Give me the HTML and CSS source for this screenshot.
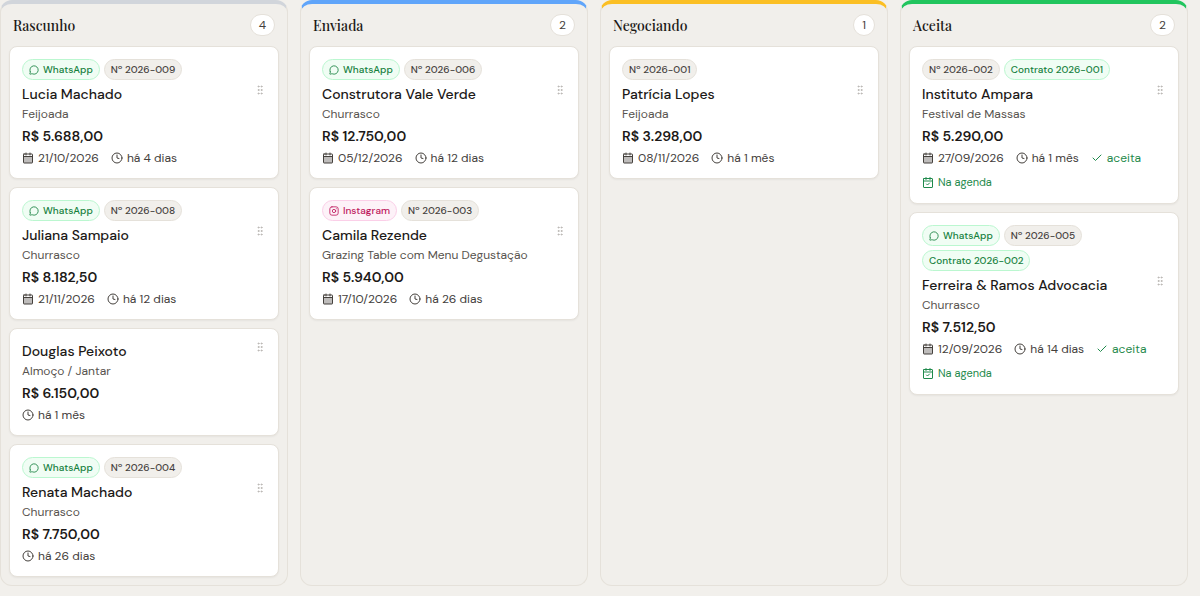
FILE: index.html
```
<!DOCTYPE html>
<html lang="pt-BR">
<head>
<meta charset="utf-8">
<meta name="viewport" content="width=device-width, initial-scale=1">
<title>Propostas</title>
<link rel="stylesheet" href="styles.css">
</head>
<body>
<svg class="sprite" aria-hidden="true">
  <symbol id="chat" viewBox="0 0 24 24"><path d="M2.992 16.342a2 2 0 0 1 .094 1.167l-1.065 3.29a1 1 0 0 0 1.236 1.168l3.413-.998a2 2 0 0 1 1.099.092 10 10 0 1 0-4.777-4.719"/></symbol>
  <symbol id="instagram" viewBox="0 0 24 24"><rect x="2" y="2" width="20" height="20" rx="5"/><circle cx="12" cy="12" r="4"/><path d="M17.5 6.5h.01"/></symbol>
  <symbol id="grip" viewBox="0 0 24 24"><circle cx="9" cy="5" r="1"/><circle cx="9" cy="12" r="1"/><circle cx="9" cy="19" r="1"/><circle cx="15" cy="5" r="1"/><circle cx="15" cy="12" r="1"/><circle cx="15" cy="19" r="1"/></symbol>
  <symbol id="calendar" viewBox="0 0 24 24"><rect x="3" y="9" width="18" height="13" fill="currentColor" fill-opacity=".35" stroke="none"/><path d="M8 2v4M16 2v4M3 9h18"/><rect x="3" y="4" width="18" height="18" rx="1"/></symbol>
  <symbol id="agenda" viewBox="0 0 24 24"><path d="M8 1v4M16 1v4M3 8h18M9 14l2 2 4-4"/><rect x="3" y="3" width="18" height="18" rx="1"/></symbol>
  <symbol id="clock" viewBox="0 0 24 24"><circle cx="12" cy="12" r="10"/><path d="M12 6v6l4 1"/></symbol>
  <symbol id="check" viewBox="0 0 24 24"><path d="M20 6 9 17l-5-5"/></symbol>
</svg>
<main class="board">
  <section class="column column-draft">
    <header class="column-header"><h2>Rascunho</h2><span class="count">4</span></header>
    <div class="cards">
      <article class="card">
        <div class="badges"><span class="badge green"><svg><use href="#chat"/></svg>WhatsApp</span><span class="badge">Nº 2026-009</span></div>
        <div class="title-row"><h3>Lucia Machado</h3><button class="grip" type="button" aria-label="Mover"><svg><use href="#grip"/></svg></button></div>
        <p class="menu">Feijoada</p>
        <p class="price">R$ 5.688,00</p>
        <div class="meta"><span><svg><use href="#calendar"/></svg>21/10/2026</span><span><svg><use href="#clock"/></svg>há 4 dias</span></div>
      </article>
      <article class="card">
        <div class="badges"><span class="badge green"><svg><use href="#chat"/></svg>WhatsApp</span><span class="badge">Nº 2026-008</span></div>
        <div class="title-row"><h3>Juliana Sampaio</h3><button class="grip" type="button" aria-label="Mover"><svg><use href="#grip"/></svg></button></div>
        <p class="menu">Churrasco</p>
        <p class="price">R$ 8.182,50</p>
        <div class="meta"><span><svg><use href="#calendar"/></svg>21/11/2026</span><span><svg><use href="#clock"/></svg>há 12 dias</span></div>
      </article>
      <article class="card">
        <div class="title-row"><h3>Douglas Peixoto</h3><button class="grip" type="button" aria-label="Mover"><svg><use href="#grip"/></svg></button></div>
        <p class="menu">Almoço / Jantar</p>
        <p class="price">R$ 6.150,00</p>
        <div class="meta"><span><svg><use href="#clock"/></svg>há 1 mês</span></div>
      </article>
      <article class="card">
        <div class="badges"><span class="badge green"><svg><use href="#chat"/></svg>WhatsApp</span><span class="badge">Nº 2026-004</span></div>
        <div class="title-row"><h3>Renata Machado</h3><button class="grip" type="button" aria-label="Mover"><svg><use href="#grip"/></svg></button></div>
        <p class="menu">Churrasco</p>
        <p class="price">R$ 7.750,00</p>
        <div class="meta"><span><svg><use href="#clock"/></svg>há 26 dias</span></div>
      </article>
    </div>
  </section>
  <section class="column column-sent">
    <header class="column-header"><h2>Enviada</h2><span class="count">2</span></header>
    <div class="cards">
      <article class="card">
        <div class="badges"><span class="badge green"><svg><use href="#chat"/></svg>WhatsApp</span><span class="badge">Nº 2026-006</span></div>
        <div class="title-row"><h3>Construtora Vale Verde</h3><button class="grip" type="button" aria-label="Mover"><svg><use href="#grip"/></svg></button></div>
        <p class="menu">Churrasco</p>
        <p class="price">R$ 12.750,00</p>
        <div class="meta"><span><svg><use href="#calendar"/></svg>05/12/2026</span><span><svg><use href="#clock"/></svg>há 12 dias</span></div>
      </article>
      <article class="card">
        <div class="badges"><span class="badge pink"><svg><use href="#instagram"/></svg>Instagram</span><span class="badge">Nº 2026-003</span></div>
        <div class="title-row"><h3>Camila Rezende</h3><button class="grip" type="button" aria-label="Mover"><svg><use href="#grip"/></svg></button></div>
        <p class="menu">Grazing Table com Menu Degustação</p>
        <p class="price">R$ 5.940,00</p>
        <div class="meta"><span><svg><use href="#calendar"/></svg>17/10/2026</span><span><svg><use href="#clock"/></svg>há 26 dias</span></div>
      </article>
    </div>
  </section>
  <section class="column column-negotiating">
    <header class="column-header"><h2>Negociando</h2><span class="count">1</span></header>
    <div class="cards">
      <article class="card">
        <div class="badges"><span class="badge">Nº 2026-001</span></div>
        <div class="title-row"><h3>Patrícia Lopes</h3><button class="grip" type="button" aria-label="Mover"><svg><use href="#grip"/></svg></button></div>
        <p class="menu">Feijoada</p>
        <p class="price">R$ 3.298,00</p>
        <div class="meta"><span><svg><use href="#calendar"/></svg>08/11/2026</span><span><svg><use href="#clock"/></svg>há 1 mês</span></div>
      </article>
    </div>
  </section>
  <section class="column column-accepted">
    <header class="column-header"><h2>Aceita</h2><span class="count">2</span></header>
    <div class="cards">
      <article class="card">
        <div class="badges"><span class="badge">Nº 2026-002</span><span class="badge green">Contrato 2026-001</span></div>
        <div class="title-row"><h3>Instituto Ampara</h3><button class="grip" type="button" aria-label="Mover"><svg><use href="#grip"/></svg></button></div>
        <p class="menu">Festival de Massas</p>
        <p class="price">R$ 5.290,00</p>
        <div class="meta"><span><svg><use href="#calendar"/></svg>27/09/2026</span><span><svg><use href="#clock"/></svg>há 1 mês</span><span class="accepted"><svg><use href="#check"/></svg>aceita</span></div>
        <a class="agenda" href="#"><svg><use href="#agenda"/></svg>Na agenda</a>
      </article>
      <article class="card">
        <div class="badges"><span class="badge green"><svg><use href="#chat"/></svg>WhatsApp</span><span class="badge">Nº 2026-005</span><span class="badge green">Contrato 2026-002</span></div>
        <div class="title-row"><h3>Ferreira &amp; Ramos Advocacia</h3><button class="grip" type="button" aria-label="Mover"><svg><use href="#grip"/></svg></button></div>
        <p class="menu">Churrasco</p>
        <p class="price">R$ 7.512,50</p>
        <div class="meta"><span><svg><use href="#calendar"/></svg>12/09/2026</span><span><svg><use href="#clock"/></svg>há 14 dias</span><span class="accepted"><svg><use href="#check"/></svg>aceita</span></div>
        <a class="agenda" href="#"><svg><use href="#agenda"/></svg>Na agenda</a>
      </article>
    </div>
  </section>
</main>
</body>
</html>
```
FILE: styles.css
```
* { box-sizing: border-box; }
body {
  margin: 0;
  background: #f2f0ec;
  color: #1c1917;
  font-family: "DM Sans", Inter, "Liberation Sans", sans-serif;
  font-size: 12px;
  line-height: 16px;
}
h2, h3, p { margin: 0; }
svg {
  width: 12px;
  height: 12px;
  flex: none;
  fill: none;
  stroke: currentColor;
  stroke-width: 2;
  stroke-linecap: round;
  stroke-linejoin: round;
}
.sprite { display: none; }
.board {
  display: grid;
  grid-template-columns: repeat(4, minmax(0, 1fr));
  gap: 12px;
  padding: 0 12px 10px 0;
}
.column {
  border: 1px solid #e5e1da;
  border-top: 4px solid;
  border-radius: 12px;
  background: #f1efeb;
}
.column-draft { border-top-color: #d1d5db; }
.column-sent { border-top-color: #60a5fa; }
.column-negotiating { border-top-color: #fbbf24; }
.column-accepted { border-top-color: #22c55e; }
.column-header {
  display: flex;
  align-items: center;
  justify-content: space-between;
  padding: 10px 12px;
}
.column-header h2 {
  font: 500 14px/21px "Playfair Display", "Liberation Serif", serif;
}
.count {
  padding: 2px 8px;
  border: 1px solid #e5e1da;
  border-radius: 11px;
  background: #fff;
  color: #44403c;
}
.cards {
  display: flex;
  flex-direction: column;
  gap: 8px;
  padding: 0 8px 8px;
}
.card {
  padding: 12px;
  border: 1px solid #e5e1da;
  border-radius: 8px;
  background: #fff;
  box-shadow: 0 1px 2px rgba(0, 0, 0, 0.05);
}
.badges {
  display: flex;
  flex-wrap: wrap;
  gap: 4px;
  margin-bottom: 4px;
}
.badge {
  display: flex;
  align-items: center;
  gap: 4px;
  padding: 2px 6px;
  border: 1px solid #e5e1da;
  border-radius: 11px;
  background: #f1efeb;
  color: #44403c;
  font-size: 10px;
  font-weight: 500;
  line-height: 15px;
}
.badge svg { width: 10px; height: 10px; }
.green { border-color: #bbf7d0; background: #f0fdf4; color: #15803d; }
.pink { border-color: #fbcfe8; background: #fdf2f8; color: #be185d; }
.title-row {
  display: flex;
  justify-content: space-between;
  align-items: flex-start;
}
.title-row h3 {
  font-size: 14px;
  font-weight: 500;
  line-height: 20px;
}
.grip {
  display: flex;
  padding: 0;
  border: 0;
  background: none;
  color: #b8b5b1;
  cursor: grab;
}
.menu { margin-top: 2px; color: #57534e; }
.price {
  margin-top: 4px;
  font-size: 14px;
  font-weight: 600;
  line-height: 20px;
}
.meta {
  display: flex;
  flex-wrap: wrap;
  gap: 4px 12px;
  margin-top: 4px;
  color: #44403c;
}
.meta span, .agenda {
  display: flex;
  align-items: center;
  gap: 4px;
}
.meta .accepted { color: #1f8a4c; }
.agenda {
  width: fit-content;
  margin-top: 8px;
  color: #1f8a4c;
  font-size: 11px;
  line-height: 17px;
  text-decoration: none;
}
```
